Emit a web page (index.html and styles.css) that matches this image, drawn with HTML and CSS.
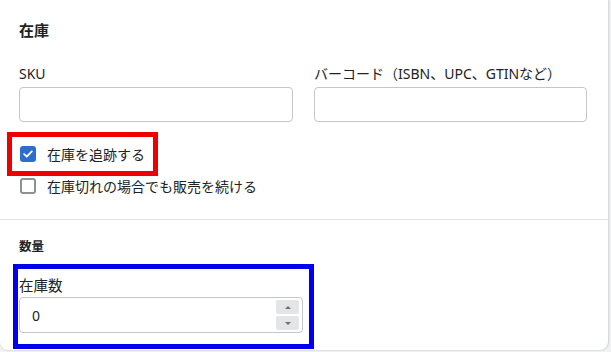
FILE: index.html
```html
<!DOCTYPE html>
<html lang="ja">
<head>
  <meta charset="UTF-8">
  <title>在庫</title>
  <link rel="stylesheet" href="styles.css">
</head>
<body>
  <div class="card">
    <div class="section">
      <h2 class="title">在庫</h2>

      <div class="grid">
        <div class="field">
          <label class="label">SKU</label>
          <div class="input"></div>
        </div>
        <div class="field">
          <label class="label">バーコード（ISBN、UPC、GTINなど）</label>
          <div class="input"></div>
        </div>
      </div>

      <div class="checks">
        <div class="check-row mark-red">
          <span class="box checked">
            <svg width="10" height="8" viewBox="0 0 10 8"><path d="M1.2 4.2 L3.8 6.6 L8.8 1.4" fill="none" stroke="#fff" stroke-width="1.8" stroke-linecap="round" stroke-linejoin="round"/></svg>
          </span>
          <span>在庫を追跡する</span>
        </div>
        <div class="check-row">
          <span class="box"></span>
          <span>在庫切れの場合でも販売を続ける</span>
        </div>
      </div>
    </div>

    <div class="section lower">
      <h3 class="subtitle">数量</h3>
      <div class="qty mark-blue">
        <label class="qty-label">在庫数</label>
        <div class="input number">
          <span>0</span>
          <div class="spinner">
            <span class="spin"><i class="up"></i></span>
            <span class="spin"><i class="down"></i></span>
          </div>
        </div>
      </div>
    </div>
  </div>
</body>
</html>
```

FILE: styles.css
```css
* {
  box-sizing: border-box;
}

body {
  margin: 0;
  background: #f1f2f4;
  font-family: "Noto Sans", "Noto Sans CJK JP", sans-serif;
  color: #202223;
  height: 352px;
  overflow: hidden;
}

.card {
  width: 608px;
  height: 350px;
  background: #fff;
  border-radius: 0 0 8px 8px;
  box-shadow: 0 0 2px rgba(0, 0, 0, 0.18), 1px 0 2px rgba(0, 0, 0, 0.08);
}

.section {
  padding: 20px 21px 23px 19px;
}

.title {
  margin: 0;
  font-size: 15px;
  font-weight: 700;
  line-height: 20px;
}

.grid {
  margin-top: 24px;
  display: grid;
  grid-template-columns: 274px 273px;
  gap: 21px;
}

.label {
  display: block;
  font-size: 14px;
  line-height: 20px;
}

.input {
  margin-top: 3px;
  height: 35px;
  border: 1px solid #c4c6c9;
  border-radius: 4px;
  background: #fff;
}

.checks {
  margin-top: 22px;
  display: flex;
  flex-direction: column;
  gap: 12px;
}

.check-row {
  display: flex;
  align-items: center;
  gap: 11px;
  height: 20px;
  padding-left: 1px;
  font-size: 14px;
  width: 127px;
  white-space: nowrap;
}

.box {
  width: 16px;
  height: 16px;
  border: 2px solid #8c9196;
  border-radius: 3px;
  display: flex;
  align-items: center;
  justify-content: center;
  flex-shrink: 0;
}

.box.checked {
  border: none;
  background: #2c6ecb;
}

.mark-red {
  outline: 5px solid #ee0000;
  outline-offset: 7px;
}

.lower {
  border-top: 1px solid #e1e3e5;
  padding-top: 19px;
  padding-bottom: 0;
}

.subtitle {
  margin: 0;
  font-size: 12.5px;
  font-weight: 700;
  line-height: 16px;
}

.qty {
  margin-top: 14px;
  margin-left: -1px;
  width: 291px;
  padding: 5px 6px 11px 1px;
  outline: 5px solid #0000ee;
}

.qty-label {
  display: block;
  font-size: 14.5px;
  line-height: 23px;
}

.number {
  margin-top: 0;
  height: 36px;
  display: flex;
  align-items: center;
  justify-content: space-between;
  padding: 0 3px 0 12px;
  font-size: 14px;
}

.spinner {
  display: flex;
  flex-direction: column;
  gap: 2px;
}

.spin {
  width: 23px;
  height: 14px;
  background: #e4e5e7;
  border-radius: 2px;
  display: flex;
  align-items: center;
  justify-content: center;
}

.spin i {
  width: 0;
  height: 0;
  border-left: 3px solid transparent;
  border-right: 3px solid transparent;
}

.spin .up {
  border-bottom: 3px solid #6d7175;
}

.spin .down {
  border-top: 3px solid #6d7175;
}
```
